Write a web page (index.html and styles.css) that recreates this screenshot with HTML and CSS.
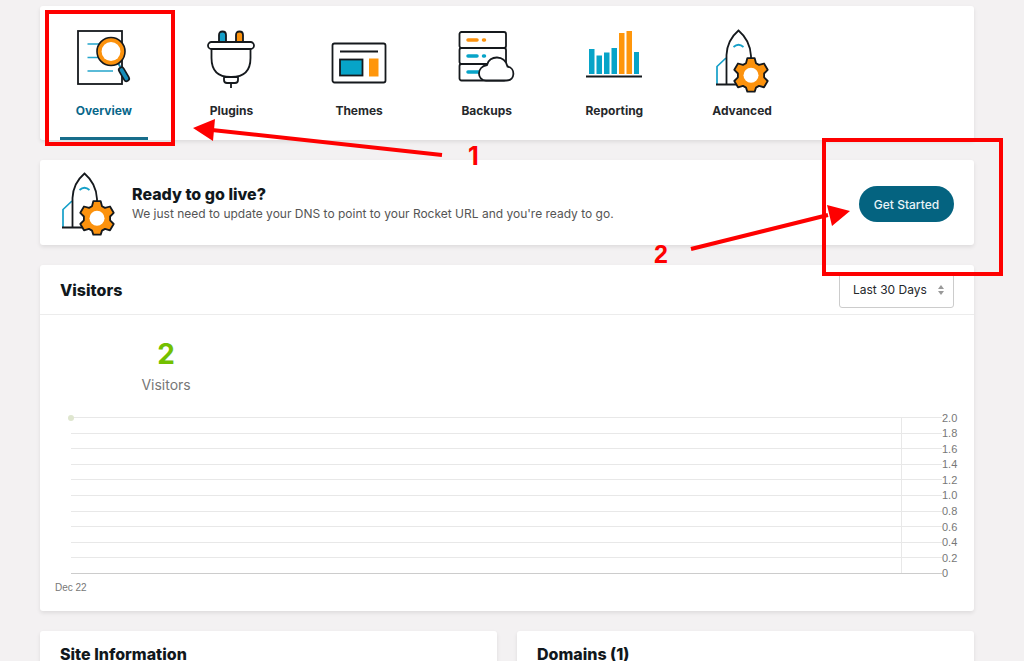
FILE: index.html
```html
<!DOCTYPE html>
<html lang="en">
<head>
<meta charset="utf-8">
<meta name="viewport" content="width=device-width, initial-scale=1">
<title>Site Overview</title>
<link rel="stylesheet" href="styles.css">
</head>
<body>
<svg class="defs" aria-hidden="true">
  <symbol id="rocket" viewBox="0 0 54 64">
    <path d="M11 29 2 37.500V55" fill="none" stroke="#159fc8" stroke-width="1.700"/>
    <path d="M1 55.500h24M11.500 55V26C12 15 17 7 23.500 1.500 30 7 35.500 16 36 27v4" fill="#fff" stroke="#15191d" stroke-width="1.800"/>
    <path d="M18.500 18q5-4.500 10 0" fill="none" stroke="#159fc8" stroke-width="1.800"/>
    <path d="M32.300 29.200h7.400l1.300 5 3 1.700 5-1.400 3.700 6.300-3.600 3.700v3.800l3.600 3.700-3.700 6.300-5-1.400-3 1.700-1.300 4h-7.400l-1.300-4-3-1.700-5 1.400-3.700-6.300 3.600-3.700v-3.800l-3.600-3.700 3.700-6.300 5 1.400 3-1.700z" fill="#fc920d" stroke="#15191d" stroke-width="1.800" stroke-linejoin="round"/>
    <circle cx="36" cy="46.300" r="7.500" fill="#fff"/>
  </symbol>
</svg>
<div class="page">
  <nav class="card tabs" aria-label="Site sections">
    <ul class="tab-list">
      <li><a class="tab tab-active" href="#overview" aria-current="page">
        <svg class="icon" viewBox="0 0 64 64" aria-hidden="true">
          <rect x="6" y="2" width="44" height="53" fill="#fff" stroke="#15191d" stroke-width="1.800"/>
          <path d="M15.500 15H28M15.500 28.500H28M15.500 42H41" stroke="#24a5cc" stroke-width="1.600"/>
          <path d="m46 34 3 5" stroke="#168db8" stroke-width="2"/>
          <path d="m49.500 41 5 8.500" stroke="#15191d" stroke-width="7" stroke-linecap="round"/>
          <path d="m49.500 41 5 8.500" stroke="#168db8" stroke-width="3.600" stroke-linecap="round"/>
          <circle cx="39" cy="22.500" r="14" fill="#fc920d" stroke="#15191d" stroke-width="1.600"/>
          <circle cx="39" cy="22.500" r="9.400" fill="#fff"/>
        </svg><span>Overview</span></a></li>
      <li><a class="tab" href="#plugins">
        <svg class="icon" viewBox="0 0 64 64" aria-hidden="true" fill="#fff" stroke="#15191d" stroke-width="1.800">
          <path d="M20 13V6q0-3.500 3.500-3.500T27 6v7z" fill="#159fc8"/>
          <path d="M37 13V6q0-3.500 3.500-3.500T44 6v7z" fill="#fc920d"/>
          <path d="M12.500 19h39v10q0 19-19 19h-1q-19 0-19-19zM25 48h14v3q0 3-3 3h-8q-3 0-3-3zM32 54v5"/>
          <rect x="9" y="13" width="46" height="7" rx="3.500"/>
        </svg><span>Plugins</span></a></li>
      <li><a class="tab" href="#themes">
        <svg class="icon" viewBox="0 0 64 64" aria-hidden="true" stroke="#15191d" stroke-width="1.800">
          <rect x="5.500" y="14.500" width="53" height="39" rx="2" fill="#fff"/>
          <path d="M13 22.500h38"/>
          <rect x="13" y="30.500" width="22.500" height="16" fill="#07a4c8"/>
          <path d="M42 29.500h9.500v18H42z" fill="#ff960b" stroke="none"/>
        </svg><span>Themes</span></a></li>
      <li><a class="tab" href="#backups">
        <svg class="icon" viewBox="0 0 64 64" aria-hidden="true" stroke="#15191d" stroke-width="1.800">
          <rect x="4.500" y="3" width="46.500" height="16" rx="2" fill="#fff"/>
          <rect x="4.500" y="19" width="46.500" height="16" rx="2" fill="#fff"/>
          <rect x="4.500" y="35" width="46.500" height="16.500" rx="2" fill="#fff"/>
          <path d="M13 11h9M28.500 11h1" stroke="#fc920d" stroke-width="3.500" stroke-linecap="round"/>
          <path d="M13 27h9M28.500 27h1M13 43h12" stroke="#07a4c8" stroke-width="3.500" stroke-linecap="round"/>
          <path d="M31 51.500c-9 0-10-13.500 1-15.500 2-10 18-10.500 20.500 1.500 8 1.500 8 14-1 14z" fill="#fff"/>
        </svg><span>Backups</span></a></li>
      <li><a class="tab" href="#reporting">
        <svg class="icon" viewBox="0 0 64 64" aria-hidden="true">
          <path d="M7 20h5.500v25H7zM14.500 26.500H20V45h-5.500zM22 23.500h5.500V45H22zM29.500 19H35v26h-5.500zM52 23h5v22h-5z" fill="#07a4c8"/>
          <path d="M37 4h5.500v41H37zM44.500 2H50v43h-5.500z" fill="#ff960b"/>
          <path d="M4 47.500h56" stroke="#15191d" stroke-width="1.800"/>
        </svg><span>Reporting</span></a></li>
      <li><a class="tab" href="#advanced">
        <svg class="icon" aria-hidden="true"><use href="#rocket"/></svg><span>Advanced</span></a></li>
    </ul>
  </nav>

  <section class="card banner">
    <svg class="banner-icon" aria-hidden="true"><use href="#rocket"/></svg>
    <div class="banner-copy">
      <h2>Ready to go live?</h2>
      <p>We just need to update your DNS to point to your Rocket URL and you're ready to go.</p>
    </div>
    <button class="button" type="button">Get Started</button>
  </section>

  <section class="card">
    <header class="card-head">
      <h2>Visitors</h2>
      <div class="picker">
        <select aria-label="Date range"><option>Last 30 Days</option></select>
        <svg class="picker-arrows" viewBox="0 0 8 10" aria-hidden="true"><path d="M1 4l3-4 3 4zM1 6l3 4 3-4z" fill="#999"/></svg>
      </div>
    </header>
    <div class="stat"><strong>2</strong><span>Visitors</span></div>
    <div class="chart">
      <ol class="ticks">
        <li>2.0</li><li>1.8</li><li>1.6</li><li>1.4</li><li>1.2</li><li>1.0</li><li>0.8</li><li>0.6</li><li>0.4</li><li>0.2</li><li>0</li>
      </ol>
      <i class="chart-edge"></i>
      <i class="chart-point"></i>
    </div>
    <p class="chart-date">Dec 22</p>
  </section>

  <div class="columns">
    <section class="card"><h2>Site Information</h2></section>
    <section class="card"><h2>Domains (1)</h2></section>
  </div>

  <svg class="notes" width="1024" height="300" viewBox="0 0 1024 300" role="img" aria-label="Step 1: Overview. Step 2: Get Started">
    <g fill="none" stroke="#fe0000" stroke-width="4">
      <rect x="47" y="12" width="126" height="132"/>
      <rect x="824" y="140" width="177" height="134"/>
      <path d="M442 155 212 130M691 249l137-34"/>
    </g>
    <path d="m193 128 22-9-2 22zM850 211l-23-6 5 21z" fill="#fe0000"/>
    <text class="note-one" x="468" y="165">1</text>
    <text x="654" y="263">2</text>
  </svg>
</div>
</body>
</html>
```
FILE: styles.css
```css
* { box-sizing: border-box; }

body {
  margin: 0;
  background: #f3f1f2;
  color: #11181c;
  font-family: Inter, "Liberation Sans", sans-serif;
  font-size: 12px;
}

h2, p, ul, ol { margin: 0; padding: 0; }
ul, ol { list-style: none; }
h2 { font-size: 16px; line-height: 20px; font-weight: 800; }

.defs { position: absolute; width: 0; height: 0; }

.page {
  display: flex;
  flex-direction: column;
  gap: 20px;
  height: 100vh;
  overflow: hidden;
  padding: 6px 50px 0 40px;
}
.page > * { flex-shrink: 0; }

.card {
  background: #fff;
  border-radius: 3px;
  box-shadow: 0 2px 4px rgba(0, 0, 0, 0.09);
}

.tab-list {
  display: grid;
  grid-template-columns: repeat(6, 1fr);
  width: 82%;
}
.tab {
  display: flex;
  flex-direction: column;
  align-items: center;
  gap: 9px;
  margin: 0 20px;
  padding: 23px 0 18px;
  border-bottom: 3px solid transparent;
  color: #25282b;
  font-size: 12px;
  line-height: 17px;
  font-weight: 700;
  text-decoration: none;
}
.tab-active { color: #08678a; border-color: #176d8b; }
.icon { width: 64px; height: 64px; }

.banner {
  display: flex;
  align-items: center;
  gap: 16px;
  padding: 12px 20px 9px;
}
.banner-icon { width: 56px; height: 64px; }
.banner-copy { flex: 1; }
.banner-copy p { color: #555; font-size: 12px; line-height: 20px; }
.button {
  width: 95px;
  height: 36px;
  padding: 0;
  border: 0;
  border-radius: 18px;
  background: #046380;
  color: #e8f4f8;
  font: 500 12px Inter, sans-serif;
}

.card-head {
  display: flex;
  align-items: center;
  justify-content: space-between;
  min-height: 50px;
  padding: 0 20px;
  border-bottom: 1px solid #ececec;
}
.picker { position: relative; }
.picker select {
  display: block;
  appearance: none;
  width: 115px;
  height: 36px;
  padding: 0 13px;
  border: 1px solid #ccc;
  border-radius: 3px;
  background: #fff;
  color: #25282b;
  font: 400 12px Inter, sans-serif;
}
.picker-arrows {
  position: absolute;
  top: 13px;
  right: 9px;
  width: 8px;
  height: 10px;
  pointer-events: none;
}

.stat {
  display: flex;
  flex-direction: column;
  align-items: center;
  width: 27%;
  padding-top: 22px;
}
.stat strong { color: #73c000; font-size: 28px; line-height: 34px; }
.stat span { color: #777; font-size: 14px; line-height: 28px; }

.chart {
  position: relative;
  margin: 11px 16px 0 31px;
}
.ticks {
  display: grid;
  grid-template-rows: repeat(11, 1fr);
  height: 171px;
}
.ticks li {
  display: grid;
  grid-template-columns: 1fr 16px;
  align-items: center;
  color: #777;
  font: 11px "Liberation Sans", sans-serif;
}
.ticks li::before { content: ""; border-top: 1px solid #e8e8e8; }
.ticks li:last-child::before { border-color: #ccc; }
.chart-edge {
  position: absolute;
  top: 8px;
  right: 56px;
  bottom: 8px;
  border-left: 1px solid #e8e8e8;
}
.chart-point {
  position: absolute;
  top: 5px;
  left: -3px;
  width: 6px;
  height: 6px;
  border-radius: 50%;
  background: #dfe6cf;
}
.chart-date {
  padding: 0 15px 17px;
  color: #777;
  font: 10px/13px "Liberation Sans", sans-serif;
}

.columns {
  display: grid;
  grid-template-columns: 1fr 1fr;
  gap: 20px;
}
.columns .card { padding: 13px 20px; }

.notes {
  position: absolute;
  top: 0;
  left: 0;
  pointer-events: none;
}
.notes text {
  fill: #fe0000;
  font: 700 25px "Liberation Sans", sans-serif;
}
.notes .note-one { font-family: Inter, sans-serif; }
```
